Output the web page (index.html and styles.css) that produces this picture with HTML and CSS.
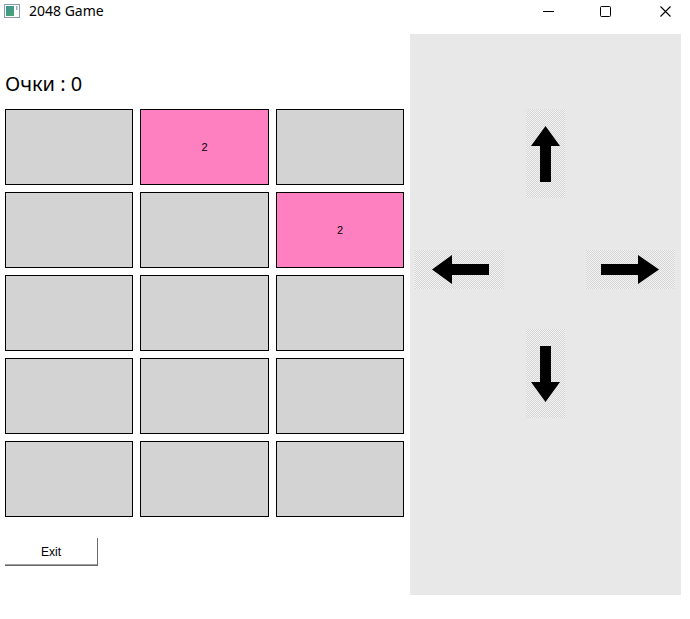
FILE: index.html
```html
<!DOCTYPE html>
<html lang="ru">
<head>
<meta charset="utf-8">
<title>2048 Game</title>
<link rel="stylesheet" href="styles.css">
</head>
<body>
<div class="window">
  <div class="titlebar">
    <svg class="app-icon" width="16" height="14" viewBox="0 0 16 14">
      <defs>
        <linearGradient id="g" x1="0" y1="0" x2="1" y2="1">
          <stop offset="0" stop-color="#3a8f9a"/>
          <stop offset="1" stop-color="#4aa86a"/>
        </linearGradient>
      </defs>
      <rect x="0.5" y="0.5" width="15" height="13" fill="#fff" stroke="#8a9aa8"/>
      <rect x="2" y="2" width="8" height="10" fill="url(#g)"/>
      <rect x="12" y="2" width="1.5" height="4" fill="#9aaab8"/>
    </svg>
    <span class="title">2048 Game</span>
    <div class="caption-buttons">
      <svg class="cap cap-min" width="11" height="11" viewBox="0 0 11 11"><line x1="0" y1="5.5" x2="11" y2="5.5" stroke="#000" stroke-width="1"/></svg>
      <svg class="cap cap-max" width="11" height="11" viewBox="0 0 11 11"><rect x="0.5" y="0.5" width="10" height="10" rx="1" fill="none" stroke="#000" stroke-width="1"/></svg>
      <svg class="cap cap-close" width="11" height="11" viewBox="0 0 11 11"><path d="M0.5 0.5 L10.5 10.5 M10.5 0.5 L0.5 10.5" stroke="#000" stroke-width="1.1" fill="none"/></svg>
    </div>
  </div>
  <div class="content">
    <div class="left">
      <div class="score">Очки : 0</div>
      <div class="board">
        <div class="tile"></div>
        <div class="tile pink">2</div>
        <div class="tile"></div>
        <div class="tile"></div>
        <div class="tile"></div>
        <div class="tile pink">2</div>
        <div class="tile"></div>
        <div class="tile"></div>
        <div class="tile"></div>
        <div class="tile"></div>
        <div class="tile"></div>
        <div class="tile"></div>
        <div class="tile"></div>
        <div class="tile"></div>
        <div class="tile"></div>
      </div>
      <button class="exit">Exit</button>
    </div>
    <div class="panel">
      <div class="arrow up">
        <svg width="39" height="89" viewBox="0 0 39 89"><path d="M19.5 17 L34 37 L25 37 L25 73 L14 73 L14 37 L5 37 Z" fill="#000"/></svg>
      </div>
      <div class="arrow left-arrow">
        <svg width="89" height="39" viewBox="0 0 89 39"><path d="M17 19.5 L37 5 L37 14 L74 14 L74 25 L37 25 L37 34 Z" fill="#000"/></svg>
      </div>
      <div class="arrow right-arrow">
        <svg width="89" height="39" viewBox="0 0 89 39"><path d="M73 19.5 L52 5 L52 14 L15 14 L15 25 L52 25 L52 34 Z" fill="#000"/></svg>
      </div>
      <div class="arrow down">
        <svg width="39" height="89" viewBox="0 0 39 89"><path d="M19.5 73 L34 53 L25 53 L25 17 L14 17 L14 53 L5 53 Z" fill="#000"/></svg>
      </div>
    </div>
  </div>
</div>
</body>
</html>
```
FILE: styles.css
```css
html, body {
  margin: 0;
  padding: 0;
  background: #ffffff;
}
.window {
  width: 690px;
  height: 619px;
  overflow: hidden;
  font-family: "Liberation Sans", Arial, sans-serif;
}
.titlebar {
  height: 22px;
  display: flex;
  align-items: center;
}
.app-icon {
  margin-left: 4px;
  display: block;
}
.title {
  margin-left: 9px;
  font-family: "Noto Sans", "Open Sans", sans-serif;
  font-size: 14px;
  color: #000;
  line-height: 22px;
}
.caption-buttons {
  margin-left: auto;
  display: flex;
  align-items: center;
  padding-right: 19px;
}
.cap { display: block; }
.cap-max { margin-left: 46px; }
.cap-close { margin-left: 49px; }
.content {
  display: flex;
  align-items: flex-start;
}
.left {
  width: 405px;
  padding-left: 5px;
}
.score {
  margin-top: 50px;
  font-family: "Noto Sans", "Open Sans", sans-serif;
  font-size: 20px;
  line-height: 24px;
  color: #000;
}
.board {
  margin-top: 13px;
  display: grid;
  grid-template-columns: 128px 129px 128px;
  grid-template-rows: 76px 76px 76px 76px 76px;
  column-gap: 7px;
  row-gap: 7px;
}
.tile {
  box-sizing: border-box;
  background: #d3d3d3;
  border: 1px solid #000;
  display: flex;
  align-items: center;
  justify-content: center;
  font-size: 11px;
  color: #000;
}
.tile.pink {
  background: #ff80c0;
}
.exit {
  display: block;
  margin-top: 21px;
  width: 93px;
  height: 28px;
  padding: 0;
  background: #ffffff;
  border: none;
  border-right: 1px solid #696969;
  border-bottom: 1px solid #696969;
  box-shadow: inset 0 -1px 0 #a0a0a0;
  font-family: "Liberation Sans", Arial, sans-serif;
  font-size: 12px;
  color: #000;
}
.panel {
  margin-top: 12px;
  width: 271px;
  height: 561px;
  box-sizing: border-box;
  background: #e8e8e8;
  padding: 75px 0 0 5px;
  display: grid;
  grid-template-columns: 89px 22px 39px 21px 89px;
  grid-template-rows: 89px 52px 39px 40px 89px;
  align-content: start;
}
.arrow {
  background: repeating-conic-gradient(#f2f2f2 0 25%, #d6d6d6 0 50%) 0 0 / 2px 2px;
}
.arrow svg { display: block; }
.up { grid-column: 3; grid-row: 1; }
.left-arrow { grid-column: 1; grid-row: 3; }
.right-arrow { grid-column: 5; grid-row: 3; }
.down { grid-column: 3; grid-row: 5; }
```
